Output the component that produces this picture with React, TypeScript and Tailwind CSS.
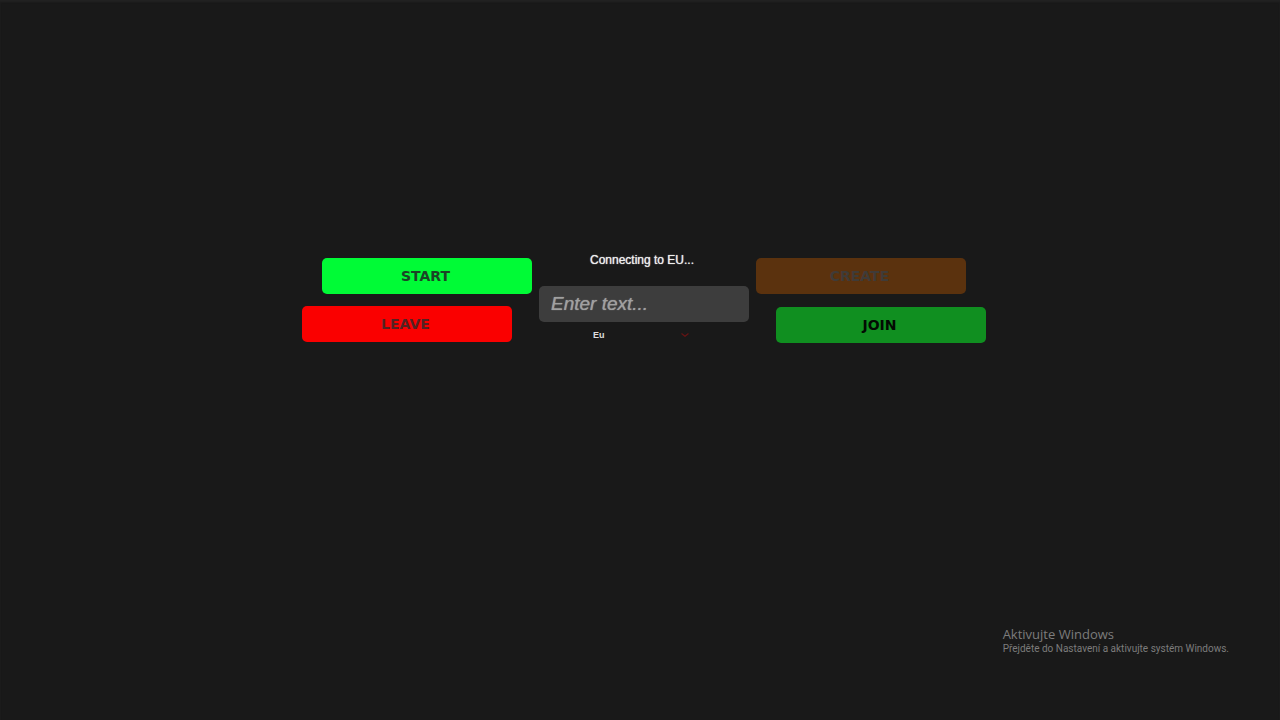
import { useState } from "react";

const buttonBase =
  "flex h-9 w-[210px] items-center justify-center rounded-[5px] pr-[3px] font-['DejaVu_Sans',sans-serif] text-sm font-bold uppercase";

const regions = ["Eu", "Us", "Asia"];

export default function App() {
  const [room, setRoom] = useState("");
  const [region, setRegion] = useState("Eu");

  return (
    <div className="flex min-h-screen flex-col bg-[#191919] font-['Liberation_Sans',Arial,sans-serif] text-white shadow-[inset_0_2px_2px_#222222]">
      <main className="flex grow items-start justify-center gap-[7px] pt-[258px] pl-2">
        <section className="flex w-[230px] flex-col gap-3">
          <button type="button" className={`${buttonBase} self-end bg-[#00fb36] text-[#1c4426]`}>
            Start
          </button>
          <button type="button" className={`${buttonBase} self-start bg-[#fa0000] text-[#542222]`}>
            Leave
          </button>
        </section>

        <section className="-mt-2 flex w-[210px] flex-col items-center">
          <p className="pr-1 text-xs leading-5 text-[#eeeeee] text-shadow-[0_0_1px_#eeeeee]">
            Connecting to EU...
          </p>
          <input
            type="text"
            aria-label="Room name"
            placeholder="Enter text..."
            value={room}
            onChange={(event) => setRoom(event.target.value)}
            className="mt-4 h-9 w-full rounded-[5px] bg-[#3d3d3d] px-3 text-[19px] text-white outline-none placeholder:text-[#a0a0a0] placeholder:italic placeholder:text-shadow-[0_0_1px_#a0a0a0]"
          />
          <div className="mt-1 grid w-[106px] items-center">
            <select
              aria-label="Region"
              value={region}
              onChange={(event) => setRegion(event.target.value)}
              className="col-start-1 row-start-1 h-[18px] w-full appearance-none bg-transparent px-0.5 text-[9px] leading-[18px] font-bold text-[#dddddd] outline-none"
            >
              {regions.map((name) => (
                <option key={name}>{name}</option>
              ))}
            </select>
            <svg
              viewBox="0 0 8 4"
              className="pointer-events-none col-start-1 row-start-1 mr-2 h-1 w-2 justify-self-end"
              fill="none"
              stroke="#641414"
              strokeWidth="1.2"
              aria-hidden="true"
            >
              <path d="M0.5 0.5 L4 3.3 L7.5 0.5" />
            </svg>
          </div>
        </section>

        <section className="flex w-[230px] flex-col gap-[13px]">
          <button type="button" disabled className={`${buttonBase} self-start bg-[#5b320e] text-[#3f3b38]`}>
            Create
          </button>
          <button type="button" className={`${buttonBase} self-end bg-[#108f20] text-[#030a03]`}>
            Join
          </button>
        </section>
      </main>

      <footer className="self-end pr-[51px] pb-16 text-[#7c7c7c]">
        <p className="font-['Open_Sans','Noto_Sans',sans-serif] text-[13px] leading-4">Aktivujte Windows</p>
        <p className="font-[Roboto,'Noto_Sans',sans-serif] text-[10px] leading-[14px]">
          Přejděte do Nastavení a aktivujte systém Windows.
        </p>
      </footer>
    </div>
  );
}
